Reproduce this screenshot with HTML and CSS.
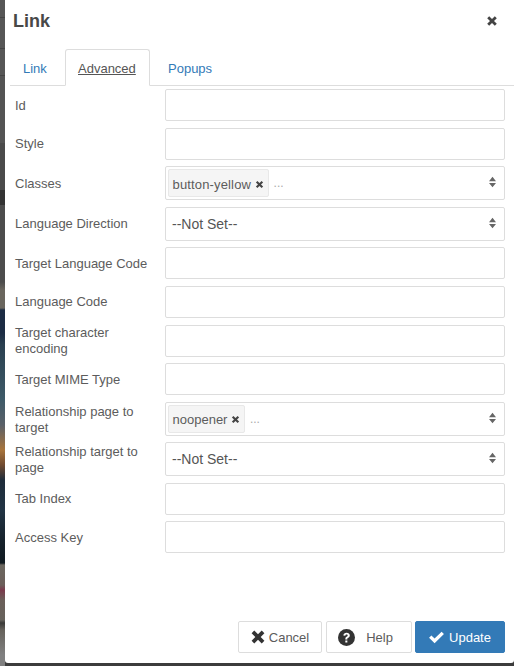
FILE: index.html
```html
<!DOCTYPE html>
<html lang="en">
<head>
<meta charset="utf-8">
<title>Link</title>
<link rel="stylesheet" href="styles.css">
</head>
<body>
<div class="backdrop"></div>
<main class="modal">
  <header class="head">
    <h1>Link</h1>
    <svg class="close" viewBox="0 0 12 12"><path d="M1.200 3.200 3.200 1.200 6 4 8.800 1.200 10.800 3.200 8 6l2.800 2.800-2 2L6 8l-2.800 2.800-2-2L4 6z"/></svg>
  </header>
  <nav class="tabs">
    <a class="tab">Link</a>
    <a class="tab active">Advanced</a>
    <a class="tab">Popups</a>
  </nav>
  <form class="fields">
    <div class="row"><label>Id</label><div class="input"></div></div>
    <div class="row"><label>Style</label><div class="input"></div></div>
    <div class="row"><label>Classes</label>
      <div class="input select"><span class="chip chip-wide">button-yellow<svg class="x" viewBox="0 0 12 12"><path d="M1.200 3.200 3.200 1.200 6 4 8.800 1.200 10.800 3.200 8 6l2.800 2.800-2 2L6 8l-2.800 2.800-2-2L4 6z"/></svg></span><span class="more">...</span>
        <svg class="updown" viewBox="0 0 8 12"><path d="M4 0 8 5H0zM0 7h8l-4 5z"/></svg></div></div>
    <div class="row"><label>Language Direction</label>
      <div class="input select plain">--Not Set--<svg class="updown" viewBox="0 0 8 12"><path d="M4 0 8 5H0zM0 7h8l-4 5z"/></svg></div></div>
    <div class="row"><label>Target Language Code</label><div class="input"></div></div>
    <div class="row"><label>Language Code</label><div class="input"></div></div>
    <div class="row"><label>Target character encoding</label><div class="input"></div></div>
    <div class="row"><label>Target MIME Type</label><div class="input"></div></div>
    <div class="row"><label class="label-low">Relationship page to target</label>
      <div class="input select"><span class="chip">noopener<svg class="x" viewBox="0 0 12 12"><path d="M1.200 3.200 3.200 1.200 6 4 8.800 1.200 10.800 3.200 8 6l2.800 2.800-2 2L6 8l-2.800 2.800-2-2L4 6z"/></svg></span><span class="more">...</span>
        <svg class="updown" viewBox="0 0 8 12"><path d="M4 0 8 5H0zM0 7h8l-4 5z"/></svg></div></div>
    <div class="row"><label>Relationship target to page</label>
      <div class="input select plain">--Not Set--<svg class="updown" viewBox="0 0 8 12"><path d="M4 0 8 5H0zM0 7h8l-4 5z"/></svg></div></div>
    <div class="row"><label>Tab Index</label><div class="input"></div></div>
    <div class="row"><label>Access Key</label><div class="input"></div></div>
  </form>
  <footer class="foot">
    <button type="button" class="btn cancel"><svg viewBox="0 0 12 12"><path d="M1.200 3.200 3.200 1.200 6 4 8.800 1.200 10.800 3.200 8 6l2.800 2.800-2 2L6 8l-2.800 2.800-2-2L4 6z"/></svg>Cancel</button>
    <button type="button" class="btn help"><svg viewBox="0 0 16 16"><circle cx="8" cy="8" r="8"/><path class="q" d="M5 6.100C5.200 4.500 6.400 3.500 8.100 3.500c1.700 0 3 1 3 2.500 0 1.200-.7 1.800-1.500 2.300-.6.400-.8.600-.8 1.200v.3H6.900v-.5c0-1 .5-1.600 1.200-2 .6-.4 1-.7 1-1.200 0-.6-.4-.9-1-.9-.7 0-1.100.4-1.200 1.100zM6.900 10.800h1.900v1.800H6.900z"/></svg><span>Help</span></button>
    <button type="button" class="btn update"><svg viewBox="0 0 16 12"><path d="M1 6.300 3.200 4 6.200 7 12.800.5 15 2.700 6.200 11.500z"/></svg>Update</button>
  </footer>
</main>
</body>
</html>
```
FILE: styles.css
```css
* { box-sizing: border-box; }
html, body { margin: 0; height: 100%; }
body {
  width: 514px; height: 666px; overflow: hidden;
  background: #3c3c3c;
  font-family: "Liberation Sans", Arial, sans-serif;
  position: relative;
}
.backdrop {
  position: absolute; left: 0; top: 0; width: 5px; height: 666px;
  background: linear-gradient(to bottom,
    #565656 0, #565656 17px, #444 17px, #444 18px, #565656 18px, #565656 48px, #444 48px, #444 49px,
    #565656 49px, #565656 75px, #444 75px, #444 76px, #545454 76px, #545454 143px, #4a4a4a 143px, #4a4a4a 190px,
    #333 190px, #333 205px, #4c4c4c 205px, #4c4c4c 282px, #6a665e 290px, #6a665e 308px, #1c2c44 310px, #1c2c44 333px,
    #2a4050 345px, #3e5a68 400px, #5a6068 425px, #a8743c 450px, #704a30 465px, #1e2c3a 480px, #223444 510px,
    #16222c 540px, #101a20 563px, #6b675f 565px, #6b5f5a 585px, #7a3a4c 590px, #6b5f5a 600px, #66625c 620px,
    #3a3a38 623px, #66625c 630px, #808080 655px, #808080 666px);
}
.modal {
  position: absolute; left: 5px; top: 0; width: 509px; height: 663px;
  background: #fff;
  border-bottom-left-radius: 3px; border-bottom-right-radius: 3px;
  display: flex; flex-direction: column;
}
.head { height: 49px; display: flex; align-items: center; justify-content: space-between; padding: 0 16px 7px 8px; }
.head h1 { margin: 0; font-size: 18px; font-weight: 700; color: #484848; line-height: 24px; }
.close { width: 12px; height: 12px; fill: #444; }
.tabs { height: 37px; margin-left: 5px; display: flex; border-bottom: 1px solid #ddd; }
.tab { height: 37px; padding: 12px 13px 0; font-size: 13px; line-height: 16px; color: #337ab7; }
.tab:nth-child(1) { width: 55px; }
.tab.active {
  width: 85px; background: #fff; color: #555; text-decoration: underline;
  border: 1px solid #ddd; border-bottom-color: #fff; border-radius: 3px 3px 0 0; padding: 11px 12px 0;
}
.tab:nth-child(3) { padding-left: 18px; }
.fields { padding: 3.25px 9px 0 10px; display: flex; flex-direction: column; gap: 6.55px; }
.row { display: flex; align-items: center; }
.row label { width: 150px; margin: -3px 0; padding: .9px 8px 0 0; font-size: 13px; line-height: 16px; color: #5c5c5c; flex: none; }
.row .label-low { padding-top: 2px; }
.input {
  width: 340px; height: 32px; border: 1px solid #ddd; border-radius: 2px; background: #fff; flex: none;
  display: flex; align-items: center; font-size: 14px; color: #555;
}
.select { height: 34px; position: relative; padding-left: 2px; }
.plain { padding-left: 6px; }
.chip {
  height: 28px; display: inline-flex; align-items: center; padding: 2px 3.500px 0 3.500px; background: #f5f5f5;
  border: 1px solid #e8e8e8; border-radius: 2px; font-size: 13px; color: #5c5c5c; gap: 4px; white-space: nowrap;
}
.chip-wide { letter-spacing: .15px; }
.x { width: 9px; height: 9px; fill: #444; }
.more { margin-left: 5px; color: #aaa; font-size: 12px; }
.updown { position: absolute; right: 8px; top: 9px; width: 7px; height: 12px; fill: #666; }
.foot { position: absolute; right: 9px; bottom: 10px; display: flex; }
.btn {
  height: 32px; border: 1px solid #ddd; border-radius: 2px; background: #fff; color: #5c5c5c;
  font: 13px "Liberation Sans", Arial, sans-serif;
  display: inline-flex; align-items: center; padding: 0; justify-content: center;
}
.cancel { width: 84px; margin-right: 4px; padding-right: 1px; }
.cancel svg { width: 16px; height: 16px; fill: #333; margin-right: 3px; }
.help { width: 86px; margin-right: 3px; padding-right: 7px; }
.help svg { width: 17px; height: 17px; fill: #333; margin-right: 11px; }
.help .q { fill: #fff; }
.update { width: 90px; background: #337ab7; border-color: #337ab7; color: #fff; padding-right: 1px; }
.update svg { width: 17px; height: 13px; fill: #fff; margin-right: 4px; }
```
